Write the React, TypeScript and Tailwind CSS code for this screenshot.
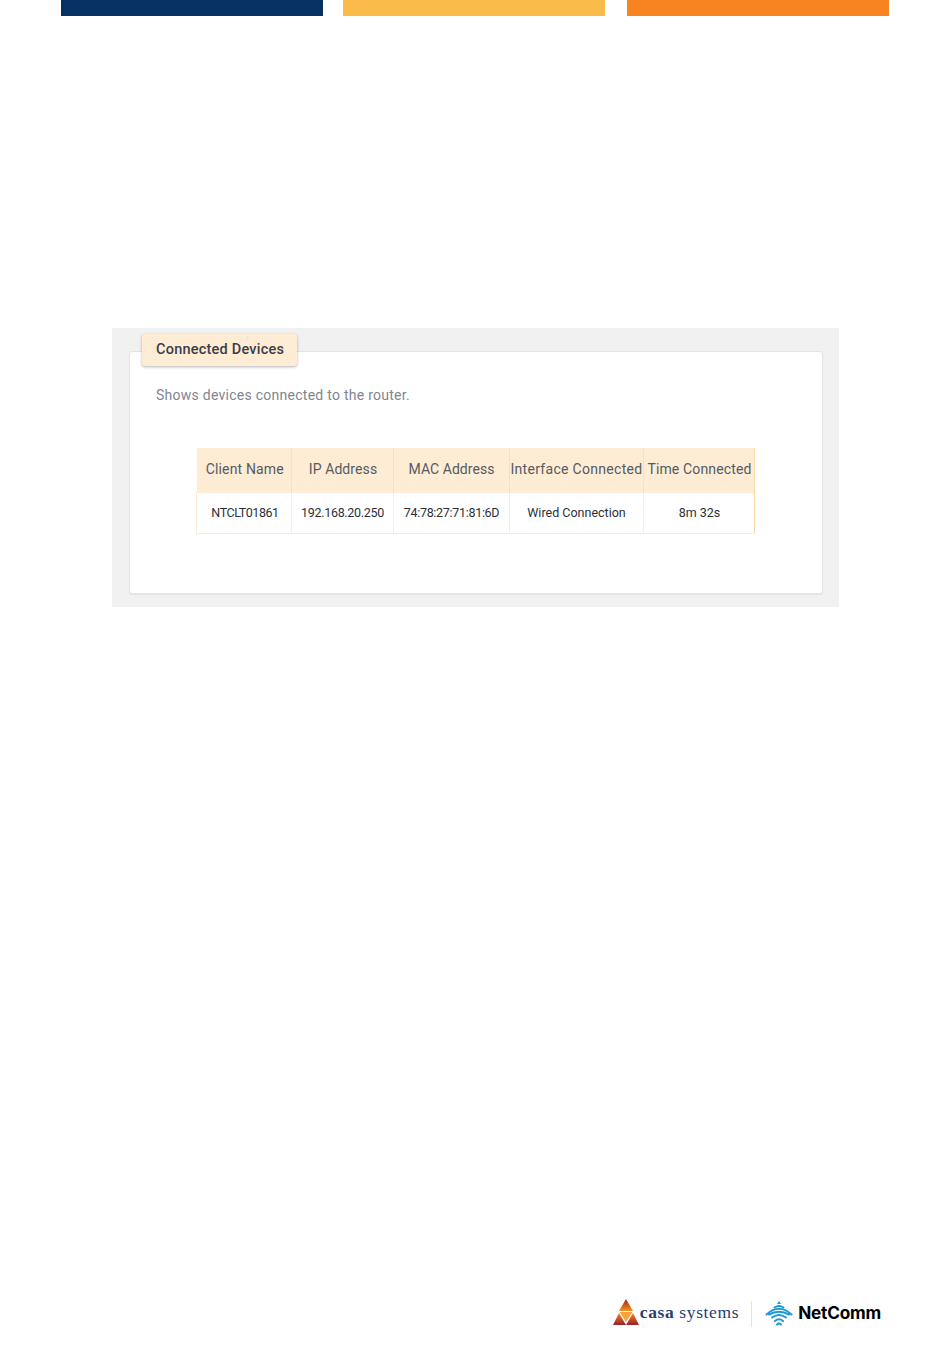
const headers = ["Client Name", "IP Address", "MAC Address", "Interface Connected", "Time Connected"];
const headerTracking = ["tracking-[0.15px] pl-[2px]", "tracking-[0.1px] pl-px", "tracking-[0.05px]", "tracking-[0.3px]", "tracking-[0.15px] pl-px"];
const cells = ["NTCLT01861", "192.168.20.250", "74:78:27:71:81:6D", "Wired Connection", "8m 32s"];
const cellTracking = ["tracking-[-0.45px] pl-[2px]", "tracking-[-0.3px]", "tracking-[-0.3px]", "tracking-[0px]", "tracking-[0px] pl-px"];
const widths = ["w-[95px]", "w-[102px]", "w-[116px]", "w-[134px]", "w-[111px]"];

function CasaLogo() {
  return (
    <svg width="26" height="27" viewBox="0 0 26 27" className="shrink-0 -mt-[2px]">
      <defs>
        <linearGradient id="casaTop" x1="0" y1="0" x2="0" y2="1">
          <stop offset="0" stopColor="#a3262a" />
          <stop offset="0.45" stopColor="#c8501f" />
          <stop offset="1" stopColor="#f7941d" />
        </linearGradient>
        <linearGradient id="casaLeft" x1="0" y1="0" x2="0" y2="1">
          <stop offset="0" stopColor="#f08a1d" />
          <stop offset="1" stopColor="#9c1f2a" />
        </linearGradient>
      </defs>
      <polygon points="13,0 20,12 6,12" fill="url(#casaTop)" />
      <polygon points="6.5,13 19.5,13 13,23" fill="#f9a13a" />
      <polygon points="6,14 13,26 0,26" fill="url(#casaLeft)" />
      <polygon points="20,14 26,26 13,26" fill="url(#casaLeft)" />
    </svg>
  );
}

function NetCommLogo() {
  return (
    <svg width="28" height="26" viewBox="0 0 28 26" fill="none" stroke="#1b9ad6" strokeLinecap="round" className="shrink-0">
      <polygon points="14,0 16,3 12,3" fill="#1b9ad6" stroke="none" />
      <path d="M9.5 6.5 Q14 3.5 18.5 6.5" strokeWidth="2" />
      <path d="M1.5 13.5 Q14 2 26.5 13.5" strokeWidth="2" />
      <path d="M4 13.5 Q14 8 24 13.5" strokeWidth="2" />
      <path d="M7 16.5 Q14 11.5 21 16.5" strokeWidth="2" />
      <path d="M10 20 Q14 16.5 18 20" strokeWidth="2" />
      <path d="M12 23.5 Q14 21.5 16 23.5" strokeWidth="2" />
    </svg>
  );
}

export default function App() {
  return (
    <div className="w-[950px] h-[1369px] bg-white flex flex-col font-['Roboto',sans-serif]">

      {/* Top colour bars */}
      <div className="flex pl-[61px] h-4">
        <div className="w-[262px] bg-[#083163]"></div>
        <div className="w-[262px] ml-5 bg-[#fbbb48]"></div>
        <div className="w-[262px] ml-[22px] bg-[#f88421]"></div>
      </div>

      {/* Connected devices panel */}
      <section className="ml-[112px] mt-[312px] w-[727px] h-[279px] bg-[#f1f1f1] px-[17px] pt-[23px]">
        <div className="w-[694px] h-[243px] bg-white border border-[#e4e4e4] rounded-[3px] shadow-[0_1px_1px_rgba(0,0,0,0.05)]">

          <div className="ml-3 -mt-[18px] w-[155px] h-[32px] bg-[#feecd5] rounded-[3px] shadow-[0_1px_3px_rgba(0,0,0,0.3)] flex items-center pl-[14px] text-[14.5px] font-medium text-[#3a3f47] tracking-[0.22px]">
            Connected Devices
          </div>

          <p className="ml-[26px] mt-[20px] text-[14px] leading-[18px] text-[#7f8690] tracking-[0.26px]">
            Shows devices connected to the router.
          </p>

          <table className="ml-[66px] mt-[44px] border-collapse table-fixed w-[558px]">
            <thead>
              <tr className="h-[44px] bg-[#feecd5]">
                {headers.map((h, i) => (
                  <th key={h} className={`${widths[i]} ${headerTracking[i]} p-0 border-r border-[#fbe0bd] last:border-[#fdd9a5] text-[14px] font-normal text-[#555b63] text-center whitespace-nowrap`}>
                    {h}
                  </th>
                ))}
              </tr>
            </thead>
            <tbody>
              <tr className="h-[41px]">
                {cells.map((c, i) => (
                  <td key={c} className={`${widths[i]} ${cellTracking[i]} p-0 pt-px border border-[#fcebd6] last:border-r-[#fdd9a5] text-[12.5px] text-[#2b303a] text-center whitespace-nowrap`}>
                    {c}
                  </td>
                ))}
              </tr>
            </tbody>
          </table>

        </div>
      </section>

      {/* Footer logos */}
      <footer className="mt-auto mb-[42px] pr-[69px] flex justify-end items-center h-[27px]">
        <CasaLogo />
        <span className="ml-px font-['Liberation_Serif',serif] text-[17.5px] tracking-[0.62px] text-[#25406f] -mt-[3px]">
          <span className="font-bold">casa</span> systems
        </span>
        <div className="ml-[12px] w-px h-[26px] bg-[#e3e3e3]"></div>
        <div className="ml-[13px] flex items-center gap-[5px]">
          <NetCommLogo />
          <span className="font-['Inter',sans-serif] text-[17.2px] font-bold text-black tracking-[-0.2px] -mt-[1px]">NetComm</span>
        </div>
      </footer>

    </div>
  );
}
